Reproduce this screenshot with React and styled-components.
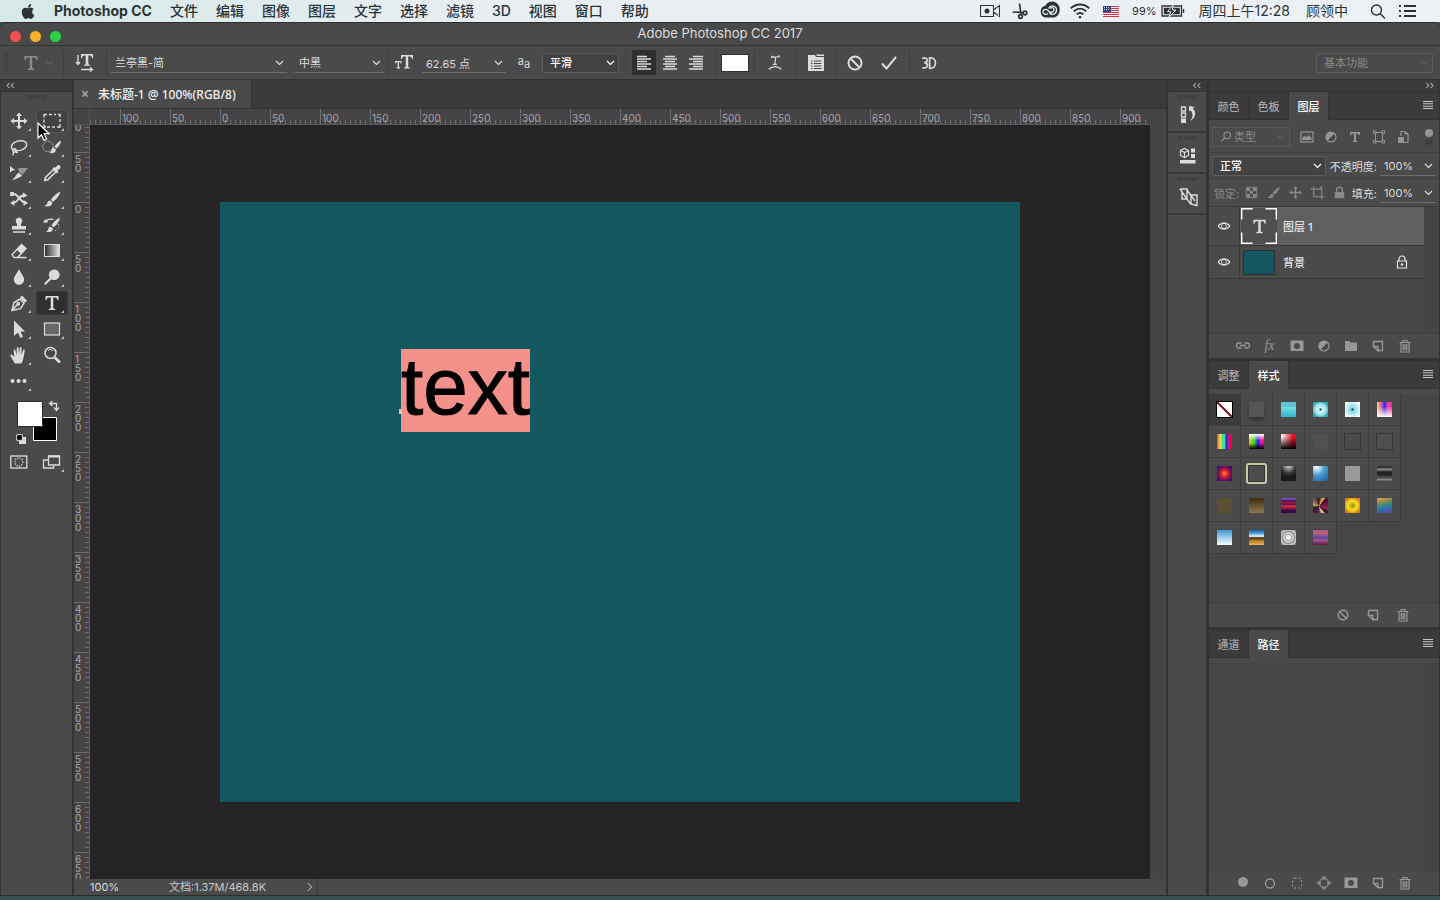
import React, { Component } from 'react';
import styled, { createGlobalStyle, css } from 'styled-components';
import { FaApple } from 'react-icons/fa';

const latin = `Inter, 'Liberation Sans', 'Noto Sans CJK SC', sans-serif`;
const humanist = `'Noto Sans', 'Noto Sans CJK SC', sans-serif`;

// ICONS, ALL DRAWN IN A 20 x 20 BOX
const icons = {
  move: (
    <path d="M10 1.500l3 3.500h-2v4h4V7l3.500 3-3.500 3v-2h-4v4h2l-3 3.500L7 15h2v-4H5v2l-3.500-3L5 7v2h4V5H7z" />
  ),
  marquee: (
    <path
      className="line"
      strokeWidth="1.4"
      d="M2 6.500V3.500h3M7 3.500h3M12 3.500h2M16 3.500h2v2.500M18 8v3M18 13v3h-3M13 16h-3M8 16H5M4 16H2v-2.500M2 11.500V8.500"
    />
  ),
  lasso: (
    <g className="line" strokeWidth="1.4">
      <path d="M5.500 13.500C1 12 1.500 7 6.500 4.800C12 2.500 18 4 17.600 8c-.4 4-6.600 6.400-12 5.300" />
      <circle cx="5.500" cy="13.500" r="1.700" />
      <path d="M4.500 15c.2 1.500-.2 2.500-1 3.200M6.500 14.500c1 1 1.500 1 2.500 1" />
    </g>
  ),
  quickSelect: (
    <g>
      <circle className="line" cx="6" cy="9.500" r="5.200" strokeDasharray="1.200 1.200" />
      <path d="M19 3.500c-2.500 1-5 3.500-6.500 6.200l2 1.800C17 9.500 18.800 6.500 19 3.500zM11.700 10.600c-2 .3-1.900 2-2.500 3.400-.4 1-1.200 1.500-2 1.800 3.500 1.300 6.600-.2 6.700-3.200z" />
    </g>
  ),
  slice: (
    <g>
      <path d="M1 3l5.500 4.200-3 .2L1 9.500z" />
      <path d="M3 17c2-1.500 4.500-5.500 6.500-7.500l3.800 3.200C10 15 6 16.500 3 17z" />
      <path opacity=".5" d="M9 5h10l-5.500 7L10 9z" />
    </g>
  ),
  eyedropper: (
    <g>
      <path d="M10.500 5.500l1.500-1.500 1.300.7 2-2.300c1.500-1.500 4.500 1 2.700 3L15.500 7.500l.9 1.400L15 10.500z" />
      <path className="line" strokeWidth="1.600" d="M11.500 6.500L3.500 14.500 2.800 17.500l3-.8 8-8z" />
    </g>
  ),
  shuffle: (
    <g>
      <path className="line" strokeWidth="2" d="M2.500 5c4-1 6 2 8 4.500s3.500 4.500 6 4M16 6c-3-.3-5 2-6.500 4S6 14.500 4 13.500" />
      <path d="M18.500 6.500L14 3.500v5.500zM1 14l4.500-3v5.800zM19 14l-4.500-3v5.800zM1.200 3h3.600v4H1.200z" />
    </g>
  ),
  brush: (
    <path d="M18.500 2.500C14.500 4 11 7.500 9 10.800l2 1.900C14.500 10.500 17.500 6.500 18.500 2.500zM8.200 11.500c-2.700.2-2.600 2.200-3.200 3.500-.5 1-1.700 1.400-2.800 1.500 3.500 1.800 8 .9 8.200-3z" />
  ),
  stamp: (
    <path d="M10 2.500a3.300 3.300 0 0 1 2.700 5.200c-.8 1.100-1 2.300-.8 3.300H17v3.500H3V11h5.100c.2-1 0-2.200-.8-3.300A3.300 3.300 0 0 1 10 2.500zM4 16.300h12v1.500H4z" />
  ),
  historyBrush: (
    <g>
      <path d="M18 2.500c-3.500 1.500-6.500 4.500-8.500 8l2 1.700c3.500-2 5.800-5.700 6.500-9.700zM8.500 11.500c-2 .3-2 2-2.500 3.200-.4 1-1.300 1.500-2 1.800 3.500 1.500 7 .2 7-3zM1 7.500L3.500 4l2.800 3.500z" />
      <path className="line" strokeWidth="1.300" d="M4 6c2-2 5-2 7.500-1.500" />
      <path className="line" strokeDasharray="1 1.500" d="M16.500 9c1.500 3-.5 6-4.500 7" />
    </g>
  ),
  eraser: (
    <g>
      <path d="M12.500 3.500l4.500 4-5 5.300L7.500 8.500z" />
      <path className="line" strokeWidth="1.400" d="M12.500 3.500l4.500 4-8.500 9H5L3 13.800zM8 16.500h9.500" />
    </g>
  ),
  gradient: (
    <g>
      <defs>
        <linearGradient id="toolGradient">
          <stop offset="0" stopColor="#2b2b2b" />
          <stop offset="1" stopColor="#e6e6e6" />
        </linearGradient>
      </defs>
      <rect x="2.500" y="3.500" width="15" height="12" fill="url(#toolGradient)" stroke="currentColor" />
    </g>
  ),
  drop: <path d="M10 2c1.500 4 5.200 7 5.200 10.500a5.200 5.200 0 0 1-10.400 0C4.800 9 8.500 6 10 2z" />,
  dodge: <path d="M12 2.500a5.300 5.300 0 1 1-2.600 9.700L3.500 18 2 16.700l5.700-6A5.300 5.300 0 0 1 12 2.500z" />,
  pen: (
    <g>
      <g className="line" strokeWidth="1.500">
        <path d="M3 17.500l2-8 6-3.500 4 4.200-3.500 5.500z" />
        <path d="M3 17.500l5.500-6" />
        <circle cx="9.300" cy="10.800" r="1.200" />
      </g>
      <path d="M11 4.500l2-2 5 5.200-2 2z" />
    </g>
  ),
  type: (
    <path d="M3.500 3h13v4h-1.200c-.3-1.800-.8-2.500-2.600-2.500h-1.400v10c0 1 .4 1.400 2 1.400V17H6.700v-1.100c1.600 0 2-.4 2-1.400v-10H7.300C5.500 4.500 5 5.200 4.700 7H3.500z" />
  ),
  arrow: <path d="M5 1.500l11 11h-4.500l2.500 5.200-2.600 1.200-2.400-5.300L5 17z" />,
  rect: <rect x="2.500" y="4" width="15" height="12" fill="#68686a" stroke="currentColor" strokeWidth="1.200" />,
  hand: (
    <path d="M6 18.500C4 16 2.800 13 1.500 11c-.7-1.200.8-2 1.800-1l2.200 2.200L4.600 5.500c-.2-1.200 1.500-1.600 1.800-.3l1.300 5V3.300c0-1.300 1.800-1.300 1.900 0l.4 6.400.8-6.800c.2-1.200 1.900-1 1.800.2l-.3 7 1.700-5c.4-1.200 2-.7 1.800.5-1 4.600-1 9-3.300 12.900z" />
  ),
  zoom: (
    <g>
      <circle className="line" cx="8.500" cy="8" r="5.500" strokeWidth="1.500" />
      <path className="line" strokeWidth="2.600" d="M12.700 12.500L18 17.500" />
      <path className="line" d="M6 5.500c2-1.500 4-1 5 .5" />
    </g>
  ),
  dots: (
    <g>
      <circle cx="3.500" cy="10" r="2" />
      <circle cx="9.500" cy="10" r="2" />
      <circle cx="15.500" cy="10" r="2" />
    </g>
  ),
  quickMask: (
    <g className="line" strokeWidth="1.300">
      <rect x="1.800" y="4" width="16" height="12" />
      <circle cx="9.800" cy="10" r="4" strokeDasharray="1.200 1.200" />
    </g>
  ),
  screenMode: (
    <g className="line" strokeWidth="1.300">
      <path d="M6 8H1.500v8h10v-2.500" />
      <path d="M6.500 4h11v9h-11z" fill="#4a4a4a" />
      <path strokeWidth="2" d="M6.500 4.500h11" />
    </g>
  ),
  orientation: (
    <g>
      <path d="M6 1h12v4h-1c-.3-1.700-.7-2.500-2.300-2.500h-1.400v8c0 1 .4 1.200 1.800 1.200v1.100H8.900v-1.100c1.400 0 1.800-.3 1.800-1.200v-8H9.300C7.700 2.500 7.300 3.300 7 5H6z" />
      <path className="line" strokeWidth="1.300" d="M3 2v9M1 9l2 2.500L5 9M6 16.500h11M15 14.500l2.500 2-2.500 2" />
    </g>
  ),
  fontSize: (
    <g>
      <path d="M7 2h12v4h-1c-.3-1.700-.7-2.500-2.300-2.500h-1.500v9.700c0 1 .4 1.200 1.900 1.200v1.100H9.900v-1.100c1.500 0 1.900-.2 1.900-1.200V3.500h-1.500C8.700 3.500 8.300 4.300 8 6H7z" />
      <path d="M1 8h6.500v2.500h-.8c-.1-.8-.4-1.300-1.200-1.300H5v4.600c0 .5.300.6 1 .6v1H2.600v-1c.7 0 1-.1 1-.6V9.200H3c-.8 0-1.100.5-1.200 1.300H1z" />
    </g>
  ),
  alignLeft: <path className="line" strokeWidth="1.300" d="M3 3.500h10M3 6h14M3 8.500h10M3 11h14M3 13.500h10M3 16h14" />,
  alignCenter: <path className="line" strokeWidth="1.300" d="M5 3.500h10M3 6h14M5 8.500h10M3 11h14M5 13.500h10M3 16h14" />,
  alignRight: <path className="line" strokeWidth="1.300" d="M7 3.500h10M3 6h14M7 8.500h10M3 11h14M7 13.500h10M3 16h14" />,
  warp: (
    <g className="line" strokeWidth="1.400">
      <path d="M6.500 3c2 .8 5 .6 8-.5M6.500 2v2.500M14.500 1.500V4M10.500 3.500c.3 3-.3 6-.8 8M7.500 11.500h4.500M3 17c4-4 10-4 14 0" />
    </g>
  ),
  charPanel: (
    <g>
      <path d="M2 2h7l1 2h8v14H2z" />
      <path d="M10 1.500h8V3h-7z" />
      <path stroke="#4a4a4a" d="M5 8h1.500M8 8h7.500M5 10.500h1.500M8 10.500h7.500M5 13h1.500M8 13h7.500M5 15.500h1.500M8 15.500h7.500" />
    </g>
  ),
  cancel: (
    <g className="line" strokeWidth="2">
      <circle cx="10" cy="10" r="6.500" />
      <path d="M5.500 5.500l9 9" />
    </g>
  ),
  check: <path className="line" strokeWidth="2" d="M3 10.500l4.500 5L17 4" />,
  threeD: (
    <g className="line" strokeWidth="1.900">
      <path d="M2.500 4.500h2.700c4 0 3.800 5-.2 5h-.5c5 0 5 6 .2 6H2.500" />
      <path d="M10.700 4.200v11.500h1.500c6.600 0 6.600-11.500 0-11.500z" />
    </g>
  ),
  history: (
    <g>
      <path className="line" strokeWidth="1.300" d="M3.500 2h4v4h-4zM3.500 8h4v4h-4z" />
      <path d="M3 13.500h5V18H3zM11 6V1l5.500 1-1.800 1.800c4.300 3.200 3 9.200-2.700 12.200 3-3.500 3.500-7.500.7-10.500z" />
    </g>
  ),
  properties: (
    <g>
      <path className="line" strokeWidth="1.200" d="M2.500 4.500l4-2 4 2v5l-4 2-4-2zM2.500 4.500l4 2 4-2M6.500 6.500v5" />
      <path d="M13 2.500h4v4h-4zM13 8h4v4h-4zM2 14h15.500v3.500H2z" />
    </g>
  ),
  character: (
    <path
      className="line"
      strokeWidth="1.400"
      d="M2 2h7v10H4V4.500M2 2l10.500 15 6.500 1.500V8h-6v9M9 3l8 11"
    />
  ),
  picture: (
    <g>
      <rect className="line" x="4" y="5" width="12" height="10" strokeWidth="1.200" />
      <path d="M5.500 13V10.500l2-2 2 2 2-2.500 3 3V13z" />
    </g>
  ),
  adjust: (
    <g>
      <circle className="line" cx="10" cy="10" r="5" strokeWidth="1.200" />
      <path d="M13.800 6.200A5.300 5.300 0 0 0 6.200 13.800z" />
    </g>
  ),
  typeSmall: <path d="M5 5h10v3.200h-1c-.2-1.200-.6-1.800-1.800-1.800H11v6.600c0 .8.300 1 1.300 1v1H7.700v-1c1 0 1.300-.2 1.300-1V6.400H7.800C6.600 6.400 6.200 7 6 8.200H5z" />,
  shape: (
    <g className="line">
      <path d="M6.500 5.500h7v9h-7z" />
      <path fill="#4a4a4a" d="M4.500 4h2.500v2.500H4.500zM13 4h2.500v2.500H13zM4.500 13.500h2.500V16H4.500zM13 13.500h2.500V16H13z" />
    </g>
  ),
  smart: (
    <g>
      <path className="line" strokeWidth="1.200" d="M8 9V4.500h4L15 7v8.500h-4M12 4.500V7h3" />
      <path d="M5 10h6v6H5z" />
    </g>
  ),
  filterSwitch: (
    <g>
      <circle cx="12" cy="6" r="4" />
      <path fill="#3f3f40" d="M8 12h8v2a4 4 0 0 1-8 0z" />
    </g>
  ),
  checker: (
    <g>
      <path className="line" d="M4.500 4.500h11v11h-11z" />
      <path d="M5 5h3.500v3.500H5zM11.500 5H15v3.500h-3.500zM8.500 8.500h3v3h-3zM5 11.500h3.500V15H5zM11.500 11.500H15V15h-3.500z" />
    </g>
  ),
  artboard: (
    <g className="line" strokeWidth="1.200">
      <path d="M3 6.500h11.500V17M6 3.500v11h11M15 3.500l-3 3" />
    </g>
  ),
  lock: (
    <g>
      <path d="M5 9.500h10V16H5z" />
      <path className="line" strokeWidth="1.500" d="M7 10V7.500a3 3 0 0 1 6 0V10" />
    </g>
  ),
  lockOutline: (
    <g>
      <path className="line" strokeWidth="1.200" d="M5.500 9h9v7h-9zM7 9V7a3 3 0 0 1 6 0v2" />
      <circle cx="10" cy="12.500" r="1.200" />
    </g>
  ),
  eye: (
    <path
      fillRule="evenodd"
      d="M3.500 10C6.500 5 13.500 5 16.500 10c-3 5-10 5-13 0zm1.800 0c1 1.500 2 2.200 3 2.600-1.600-1.400-1.600-3.800 0-5.200-1 .4-2 1.100-3 2.600zm9.400 0c-1-1.500-2-2.200-3-2.600 1.600 1.400 1.600 3.800 0 5.200 1-.4 2-1.100 3-2.600zM10 8a2 2 0 1 0 0 4 2 2 0 0 0 0-4z"
    />
  ),
  link: (
    <g className="line" strokeWidth="1.300">
      <path d="M8.500 12h-2.500a2.500 2.500 0 0 1 0-5h2.500M11.500 7H14a2.500 2.500 0 0 1 0 5h-2.500M7 9.500h6" />
    </g>
  ),
  mask: (
    <path fillRule="evenodd" d="M3.500 4.500h13v10.500h-13zM10 7a3 3 0 1 0 0 6 3 3 0 0 0 0-6z" />
  ),
  folder: <path d="M4 5h4.500l1 1.500H16V15H4z" />,
  newItem: (
    <path className="line" strokeWidth="1.300" d="M5.500 10.500V5.500h9v9h-4.500M5.500 10.500h4.500v4.500zM10 14.500l-4.500-4" />
  ),
  trash: (
    <path
      className="line"
      strokeWidth="1.200"
      d="M4.500 6.500h11M8 6.500V4.500h4v2M6 6.500v9.500h8V6.500M8.300 8v6.500M10 8v6.500M11.700 8v6.500"
    />
  ),
  forbid: (
    <g className="line" strokeWidth="1.500">
      <circle cx="10" cy="10" r="4.800" />
      <path d="M6.500 6.500l7 7" />
    </g>
  ),
  dot: <circle cx="10" cy="9" r="5" />,
  ring: <circle className="line" cx="10" cy="10.500" r="4.500" strokeWidth="1.300" />,
  selection: <rect className="line" x="5.500" y="5" width="9" height="10" rx="2" strokeDasharray="2 2" strokeWidth="1.200" />,
  workPath: (
    <g className="line" strokeWidth="1.200">
      <circle cx="10" cy="10" r="4.500" />
      <path fill="#4a4a4a" d="M9 4h2v2H9zM9 14h2v2H9zM4 9h2v2H4zM14 9h2v2h-2z" />
    </g>
  ),
  camera: (
    <g>
      <path className="line" strokeWidth="1.100" d="M.5 4.500h13v11H.5zM13.500 9l6-4.500v11l-6-4.500" />
      <circle cx="7" cy="10" r="2.500" />
    </g>
  ),
  scissors: (
    <g className="line" strokeWidth="1.700">
      <path d="M9.500 2.500L11 13M2.500 11L14 11.500" />
      <circle cx="10.500" cy="15.500" r="1.800" />
      <circle cx="15" cy="12" r="1.800" />
    </g>
  ),
  cloud: (
    <g>
      <path d="M6.500 16.500a6 6 0 0 1-1.300-11.800 7.700 7.700 0 0 1 14.300 5.500c-.5 4-3.500 6.300-6.500 6.300z" />
      <path
        stroke="#e4ecef"
        strokeWidth="1.300"
        fill="none"
        d="M11.500 13L8 9.500C5.500 7 2.500 9 3 11.200s3 3 5 1.300M8.500 7.500c2-4 8-3 8 1.500s-5 5.500-7 3M10 7.500c1.500-1.700 4-1 4 1.300s-2.500 3-3.800 1.700"
      />
    </g>
  ),
  wifi: (
    <g className="line" strokeWidth="1.900">
      <path d="M.8 7.300c5.500-5 13-5 18.400 0M3.800 10.300c4-3.400 8.500-3.400 12.400 0M6.700 13.300c2-1.700 4.600-1.700 6.600 0" />
      <path d="M9 15.500l1 1 1-1" />
    </g>
  ),
  search: (
    <g className="line" strokeWidth="1.400">
      <circle cx="8.500" cy="9" r="5" />
      <path d="M12 12.500l5 5" />
    </g>
  ),
  list: (
    <path className="line" strokeWidth="1.800" d="M6 5h12M6 10h12M6 15h12M1 5h2M1 10h2M1 15h2" />
  ),
  searchSmall: (
    <g className="line" strokeWidth="1.600">
      <circle cx="11.500" cy="8" r="4" />
      <path d="M8.500 11L4 15.500" />
    </g>
  ),
  hamburger: <path className="line" strokeWidth="1.100" d="M5 5.500h10M5 7.800h10M5 10.200h10M5 12.500h10" />
};

const Icon = ({ name, size = 20 }) => (
  <Glyph width={size} height={size} viewBox="0 0 20 20" aria-hidden="true">
    {icons[name]}
  </Glyph>
);

const Chevron = () => (
  <ChevronGlyph width="9" height="6" viewBox="0 0 9 6" aria-hidden="true">
    <path d="M1 1l3.500 3.500L8 1" />
  </ChevronGlyph>
);

const menus = ['文件', '编辑', '图像', '图层', '文字', '选择', '滤镜', '3D', '视图', '窗口', '帮助'];

const tools = [
  ['move', '移动'],
  ['marquee', '矩形选框'],
  ['lasso', '套索'],
  ['quickSelect', '快速选择'],
  ['slice', '切片'],
  ['eyedropper', '吸管'],
  ['shuffle', '内容感知移动'],
  ['brush', '画笔'],
  ['stamp', '仿制图章'],
  ['historyBrush', '历史记录画笔'],
  ['eraser', '橡皮擦'],
  ['gradient', '渐变'],
  ['drop', '模糊'],
  ['dodge', '减淡'],
  ['pen', '钢笔'],
  ['type', '文字'],
  ['arrow', '路径选择'],
  ['rect', '矩形'],
  ['hand', '抓手'],
  ['zoom', '缩放'],
  ['dots', '更多']
];

const swatches = [
  'linear-gradient(to top right, #fff 46%, #8b1a2b 46%, #8b1a2b 54%, #fff 54%)',
  '#555456',
  'linear-gradient(#5cc3d2 0 35%, #78d8e4 36%, #2fb6c6)',
  'radial-gradient(#134 0, #d9f7fa 2px, #8fdfe8 6px, #2fa9b8 8px)',
  'radial-gradient(#134 0, #8fd9ea 2px, #d5f3f8 7px, #fff 9px)',
  'linear-gradient(#0000 30%, #fff), linear-gradient(90deg, #f6e53a, #e06ab0 25%, #3b2ad0 50%, #f03cc8 75%, #e8306a)',
  'linear-gradient(90deg, #f36, #f5e92b 20%, #4be08a 38%, #2bd7e8 52%, #25307a 62%, #a020d8 75%, #f03 90%)',
  'linear-gradient(#fff, #fff0 45%, #0000 60%, #000), linear-gradient(90deg, #fb2, #3d3 35%, #22c 60%, #e1d 80%, #f12)',
  'linear-gradient(#0000 20%, #000), linear-gradient(90deg, #fff, #e01020 80%)',
  '#504f51',
  '#4a4a4a',
  '#4e4e4e',
  'radial-gradient(#ff9a1a, #e8202a 30%, #7a1060 60%, #14107a)',
  '#4c4c4c',
  'radial-gradient(circle at 50% 0, #ccc, #777 25%, #333 45%, #181818 70%)',
  'radial-gradient(circle at 25% 10%, #fff, #4a9ad2 45%, #1c5c9c)',
  '#9b999c',
  'linear-gradient(#333 2px, #999 3px, #444 5px, #222 6px, #222 9px, #555 11px, #333 12px, #999 13px, #555)',
  '#5a4e33',
  'linear-gradient(#3d2c0e, #8c7a52)',
  'linear-gradient(#7a4ac0 1px, #3a1050 3px, #b8203a 5px, #3a1050 6px, #e03040 8px, #a01840 10px, #3a1050 12px, #2a0840)',
  'conic-gradient(at 40% 55%, #301020, #e8c860 8%, #401030 12%, #a82050 30%, #111 36%, #e8e0a0 42%, #60204a 50%, #222 70%, #d0a060 80%, #301020)',
  'radial-gradient(#8a9a10, #ffe020 45%, #d87a10 80%)',
  'linear-gradient(165deg, #e8a040, #8a8a50 30%, #2a8a90 50%, #3a60b0 75%, #604a90)',
  'linear-gradient(#3d95cc, #a8d4ee 55%, #f4faff)',
  'linear-gradient(#1c5aa0, #5aa8e0 25%, #f4faff 42%, #3a2a14 52%, #b87a20 70%, #e8b060)',
  'radial-gradient(#eee 20%, #aaa 30%, #ddd 45%, #888 55%, #ccc 70%, #666)',
  'linear-gradient(#a85a8a, #c0607a 25%, #5a48a8 48%, #a05090 70%, #5a1a3a)'
];

const xRuler = [...Array(22)].map((_, i) => Math.abs(i * 50 - 150));
const yRuler = [...Array(16)].map((_, i) => Math.abs(i * 50 - 100));

class App extends Component {
  state = { tool: 'type', align: 'alignLeft', layer: 1 };

  pickTool = tool => {
    this.setState({ tool });
  };

  renderOptions() {
    const { align } = this.state;
    return (
      <OptionsBar>
        <Grip $vertical />
        <ToolPreset aria-label="文字工具预设">
          <Icon name="type" />
          <Chevron />
        </ToolPreset>
        <Divider />
        <OptionButton $width={42} aria-label="切换文本取向">
          <Icon name="orientation" />
        </OptionButton>
        <Divider />
        <Field $width={176} $gap={4}>
          <select aria-label="字体" defaultValue="兰亭黑-简">
            <option>兰亭黑-简</option>
          </select>
          <Chevron />
        </Field>
        <Field $width={89} $gap={8}>
          <select aria-label="字重" defaultValue="中黑">
            <option>中黑</option>
          </select>
          <Chevron />
        </Field>
        <Divider $before={4} />
        <OptionButton $width={30} aria-label="字号">
          <Icon name="fontSize" />
        </OptionButton>
        <Field $width={84} $gap={3}>
          <input aria-label="字体大小" defaultValue="62.65 点" />
          <Chevron />
        </Field>
        <AntiAlias>
          a<sub>a</sub>
        </AntiAlias>
        <Field $boxed $width={77}>
          <select aria-label="消除锯齿" defaultValue="平滑">
            <option>平滑</option>
          </select>
          <Chevron />
        </Field>
        <Divider $before={6} />
        <AlignGroup>
          {['alignLeft', 'alignCenter', 'alignRight'].map(name => (
            <AlignButton
              key={name}
              aria-label={name}
              $active={align === name}
              onClick={() => this.setState({ align: name })}
            >
              <Icon name={name} />
            </AlignButton>
          ))}
        </AlignGroup>
        <Divider $before={8} />
        <ColorChip aria-label="文本颜色" />
        <Divider $before={5} />
        <OptionButton $width={40} aria-label="变形文字">
          <Icon name="warp" size={18} />
        </OptionButton>
        <Divider />
        <OptionButton $width={39} aria-label="字符面板">
          <Icon name="charPanel" />
        </OptionButton>
        <Divider />
        <OptionButton $width={38} aria-label="取消">
          <Icon name="cancel" />
        </OptionButton>
        <OptionButton $width={30} aria-label="提交">
          <Icon name="check" />
        </OptionButton>
        <Divider $before={5} />
        <OptionButton $width={38} aria-label="3D">
          <Icon name="threeD" size={18} />
        </OptionButton>
        <Workspace $boxed $dim $width={117}>
          <select aria-label="工作区" defaultValue="基本功能">
            <option>基本功能</option>
          </select>
          <Chevron />
        </Workspace>
      </OptionsBar>
    );
  }

  renderToolbox() {
    const { tool } = this.state;
    return (
      <Toolbox>
        <Collapse>‹‹</Collapse>
        <ToolBody>
          <Grip />
          <ToolGrid>
            {tools.map(([name, label]) => (
              <Tool
                key={name}
                aria-label={label}
                $active={tool === name}
                $hover={name === 'marquee'}
                onClick={() => this.pickTool(name)}
              >
                <Icon name={name} />
                {name !== 'zoom' && <Corner />}
                {name === 'marquee' && (
                  <Pointer width="13" height="20" viewBox="0 0 13 20">
                    <path d="M1 1v15l3.500-3.300L7 18.500l2.600-1.200-2.500-5.600H12z" />
                  </Pointer>
                )}
              </Tool>
            ))}
          </ToolGrid>
          <ColorPair width="46" height="46" viewBox="0 0 46 46" aria-label="前景色和背景色">
            <path d="M17.500 17.500h23v23h-23z" fill="#000" stroke="#fff" />
            <path d="M1.500 1.500h25v25h-25z" fill="#fff" stroke="#2b2b2b" />
            <path d="M34.500 3.500h6v6M36.500 1l-3 2.500 3 2.500M38 7.500l2.500 3L43 7.500" fill="none" stroke="#dcdcdc" strokeWidth="1.300" />
            <path d="M3 37h7v7H3z" fill="#dcdcdc" />
            <path d="M.7 34.700h5.600v5.600H.7z" fill="#000" stroke="#dcdcdc" />
          </ColorPair>
          <ToolGrid>
            <Tool aria-label="快速蒙版">
              <Icon name="quickMask" />
            </Tool>
            <Tool aria-label="屏幕模式">
              <Icon name="screenMode" />
              <Corner />
            </Tool>
          </ToolGrid>
        </ToolBody>
      </Toolbox>
    );
  }

  renderDocument() {
    return (
      <DocumentArea>
        <DocTabs>
          <DocTab>
            <CloseTab aria-label="关闭">×</CloseTab>
            未标题-1 @ 100%(RGB/8)
          </DocTab>
        </DocTabs>
        <View>
          <RulerCorner />
          <RulerX>
            {xRuler.map((value, i) => (
              <MarkX key={i}>{value}</MarkX>
            ))}
          </RulerX>
          <Gutter />
          <RulerY>
            {yRuler.map((value, i) => (
              <MarkY key={i}>{value}</MarkY>
            ))}
          </RulerY>
          <Canvas>
            <Artboard>
              <TextLayer>text</TextLayer>
            </Artboard>
          </Canvas>
          <Gutter />
        </View>
        <StatusBar>
          <Zoom>100%</Zoom>
          <DocSize>文档:1.37M/468.8K</DocSize>
          <More aria-label="更多信息">
            <svg width="6" height="10" viewBox="0 0 6 10">
              <path d="M1 1l3.500 4L1 9" fill="none" stroke="#ccc" />
            </svg>
          </More>
        </StatusBar>
      </DocumentArea>
    );
  }

  renderPanels() {
    const { layer } = this.state;
    return (
      <Panels>
        <Collapse $right>››</Collapse>
        <Panel>
          <Tabs names={['颜色', '色板', '图层']} active="图层" />
          <FilterRow>
            <FilterBox>
              <Icon name="searchSmall" size={16} />
              <select aria-label="筛选类型" defaultValue="类型">
                <option>类型</option>
              </select>
              <Chevron />
            </FilterBox>
            <FilterIcons>
              {['picture', 'adjust', 'typeSmall', 'shape', 'smart', 'filterSwitch'].map(name => (
                <SmallButton key={name} aria-label={name} $width={24}>
                  <Icon name={name} />
                </SmallButton>
              ))}
            </FilterIcons>
          </FilterRow>
          <BlendRow>
            <Field $boxed $width={114}>
              <select aria-label="混合模式" defaultValue="正常">
                <option>正常</option>
              </select>
              <Chevron />
            </Field>
            <Amount>
              <label htmlFor="opacity">不透明度:</label>
              <Field $width={56}>
                <input id="opacity" defaultValue="100%" />
                <Chevron />
              </Field>
            </Amount>
          </BlendRow>
          <LockRow>
            <LockLabel>锁定:</LockLabel>
            {['checker', 'brush', 'move', 'artboard', 'lock'].map(name => (
              <SmallButton key={name} aria-label={name} $width={22}>
                <Icon name={name} size={name === 'brush' || name === 'move' ? 15 : 19} />
              </SmallButton>
            ))}
            <Amount>
              <label htmlFor="fill">填充:</label>
              <Field $width={56}>
                <input id="fill" defaultValue="100%" />
                <Chevron />
              </Field>
            </Amount>
          </LockRow>
          <LayerList>
            <Layer $height={38} onClick={() => this.setState({ layer: 1 })}>
              <Eye aria-label="可见">
                <Icon name="eye" />
              </Eye>
              <LayerInfo $active={layer === 1}>
                <svg width="36" height="36" viewBox="0 0 36 36" aria-hidden="true">
                  <rect width="36" height="36" fill="#4f4e51" />
                  <path d="M.7 11.500V.7h11M24.500.7h10.800v10.800M35.300 24.500v10.800H24.500M11.500 35.300H.7V24.500" fill="none" stroke="#fff" strokeWidth="1.400" />
                  <svg x="9" y="9" width="19" height="19" viewBox="0 0 20 20" fill="#dcdcdc">
                    {icons.type}
                  </svg>
                </svg>
                <span>图层 1</span>
              </LayerInfo>
            </Layer>
            <Layer $height={32} onClick={() => this.setState({ layer: 0 })}>
              <Eye aria-label="可见">
                <Icon name="eye" />
              </Eye>
              <LayerInfo $active={layer === 0}>
                <Thumb />
                <span>背景</span>
                <Icon name="lockOutline" />
              </LayerInfo>
            </Layer>
          </LayerList>
          <PanelFooter>
            <SmallButton $width={27} aria-label="链接图层">
              <Icon name="link" />
            </SmallButton>
            <SmallButton $width={27} aria-label="图层样式">
              <Fx>fx</Fx>
            </SmallButton>
            {['mask', 'adjust', 'folder', 'newItem', 'trash'].map(name => (
              <SmallButton key={name} aria-label={name} $width={27}>
                <Icon name={name} />
              </SmallButton>
            ))}
          </PanelFooter>
        </Panel>
        <Panel>
          <Tabs names={['调整', '样式']} active="样式" />
          <StylesBody>
            <StylesGrid>
              {swatches.map((fill, i) => (
                <StyleCell key={i} aria-label={`样式 ${i + 1}`} $first={i === 0}>
                  <Swatch $kind={i} style={{ background: fill }} />
                </StyleCell>
              ))}
            </StylesGrid>
          </StylesBody>
          <PanelFooter>
            {['forbid', 'newItem', 'trash'].map(name => (
              <SmallButton key={name} aria-label={name} $width={30}>
                <Icon name={name} />
              </SmallButton>
            ))}
          </PanelFooter>
        </Panel>
        <Panel $grow>
          <Tabs names={['通道', '路径']} active="路径" />
          <PathsBody />
          <PanelFooter>
            {['dot', 'ring', 'selection', 'workPath', 'mask', 'newItem', 'trash'].map(name => (
              <SmallButton key={name} aria-label={name} $width={27}>
                <Icon name={name} />
              </SmallButton>
            ))}
          </PanelFooter>
        </Panel>
      </Panels>
    );
  }

  render() {
    return (
      <Desktop>
        <GlobalStyle />
        <MenuBar>
          <AppleButton aria-label="Apple">
            <FaApple size={17} />
          </AppleButton>
          <MenuButton $bold>Photoshop CC</MenuButton>
          {menus.map(menu => (
            <MenuButton key={menu}>{menu}</MenuButton>
          ))}
          <MenuExtras>
            <Icon name="camera" />
            <Icon name="scissors" />
            <Icon name="cloud" />
            <Icon name="wifi" />
            <Flag width="16" height="11" viewBox="0 0 16 11">
              <path fill="#f3eef0" d="M0 0h16v11H0z" />
              <path stroke="#c23a4c" d="M0 .5h16M0 2.500h16M0 4.500h16M0 6.500h16M0 8.500h16M0 10.500h16" />
              <path fill="#35407c" d="M0 0h8v6H0z" />
              <path stroke="#c8cce4" strokeDasharray="1 1" d="M1 1.500h6M1 3.500h6" />
            </Flag>
            <Battery>
              99%
              <svg width="24" height="12" viewBox="0 0 24 12">
                <path d="M1 1h19.500v10H1z" fill="none" stroke="#2b3338" strokeWidth="1.300" />
                <path d="M2.800 2.800h16v6.400h-16zM21.800 4h1.400v4h-1.400z" fill="#2b3338" />
                <path d="M12 0L6.500 6.700h3.300L8 12l7-7h-3.500z" fill="#2b3338" stroke="#e6edf0" />
              </svg>
            </Battery>
            <Clock>周四上午12:28</Clock>
            <User>顾领中</User>
            <Icon name="search" />
            <Icon name="list" />
          </MenuExtras>
        </MenuBar>
        <Window>
          <TitleBar>
            <Lights>
              <Light $color="#f4504f" aria-label="关闭" />
              <Light $color="#f7b32f" aria-label="最小化" />
              <Light $color="#2fd043" aria-label="缩放" />
            </Lights>
            <Title>Adobe Photoshop CC 2017</Title>
          </TitleBar>
          {this.renderOptions()}
          <Workarea>
            {this.renderToolbox()}
            {this.renderDocument()}
            <Dock>
              <Collapse $right>‹‹</Collapse>
              {['history', 'properties', 'character'].map(name => (
                <DockItem key={name} aria-label={name}>
                  <Grip />
                  <Icon name={name} />
                </DockItem>
              ))}
            </Dock>
            {this.renderPanels()}
          </Workarea>
        </Window>
      </Desktop>
    );
  }
}

const Tabs = ({ names, active }) => (
  <TabRow>
    {names.map(name => (
      <Tab key={name} $active={name === active}>
        {name}
      </Tab>
    ))}
    <PanelMenu aria-label="面板菜单">
      <Icon name="hamburger" />
    </PanelMenu>
  </TabRow>
);

const GlobalStyle = createGlobalStyle`
  * {
    box-sizing: border-box;
  }

  body {
    margin: 0;
    font-family: ${latin};
    font-size: 11px;
    color: #dcdcdc;
  }

  button {
    border: 0;
    padding: 0;
    background: none;
    font: inherit;
    color: inherit;
  }
`;

const Glyph = styled.svg`
  display: block;
  flex: none;
  fill: currentColor;

  .line {
    fill: none;
    stroke: currentColor;
  }
`;

const ChevronGlyph = styled.svg`
  flex: none;
  fill: none;
  stroke: currentColor;
  stroke-width: 1.2;
  pointer-events: none;
`;

const Desktop = styled.div`
  height: 100vh;
  display: flex;
  flex-direction: column;
  padding-bottom: 4px;
  background: #35504f;
  overflow: hidden;
`;

const MenuBar = styled.nav`
  flex: none;
  height: 22px;
  display: flex;
  align-items: center;
  gap: 18px;
  padding: 0 22px 0 20px;
  background: linear-gradient(90deg, #d6e9e7, #e8eef2 35%, #edf1f4);
  color: #2b3338;
  font-size: 14px;
  line-height: 20px;
  white-space: nowrap;
`;

const AppleButton = styled.button`
  width: 16px;
  display: flex;
  justify-content: center;
`;

const MenuButton = styled.button`
  font-weight: ${({ $bold }) => ($bold ? 700 : 500)};
`;

const MenuExtras = styled.div`
  margin-left: auto;
  display: flex;
  align-items: center;
  gap: 10px;
`;

const Flag = styled.svg`
  margin: 0 3px;
`;

const Battery = styled.div`
  display: flex;
  align-items: center;
  gap: 4px;
  font-size: 11px;
`;

const Clock = styled.span`
  margin-left: 4px;
`;

const User = styled.span`
  margin: 0 10px 0 6px;
`;

const Window = styled.div`
  flex: 1;
  min-height: 0;
  display: flex;
  flex-direction: column;
  border: 1px solid #2d2d2d;
  border-width: 1px 0;
  border-radius: 6px 6px 0 0;
  background: #4a4a4a;
  overflow: hidden;
`;

const TitleBar = styled.header`
  flex: none;
  height: 23px;
  display: grid;
  grid-template-columns: 1fr auto 1fr;
  align-items: center;
  border-bottom: 1px solid #333;
`;

const Lights = styled.div`
  display: flex;
  gap: 9px;
  padding: 4px 0 0 10px;
`;

const Light = styled.button`
  width: 11px;
  height: 11px;
  border-radius: 50%;
  background: ${({ $color }) => $color};
`;

const Title = styled.h1`
  margin: 0;
  padding-bottom: 3px;
  font-size: 13px;
  font-weight: 400;
  line-height: 16px;
`;

const OptionsBar = styled.div`
  flex: none;
  height: 34px;
  display: flex;
  align-items: center;
  border-bottom: 1px solid #333;
`;

const Grip = styled.span`
  flex: none;
  width: 20px;
  height: 4px;
  background: repeating-linear-gradient(90deg, #3a3a3a 0 1px, #4a4a4a 1px 2px);

  ${({ $vertical }) =>
    $vertical &&
    css`
      width: 4px;
      height: 20px;
      margin-left: 4px;
      background: repeating-linear-gradient(#3e3e3e 0 1px, #4a4a4a 1px 2px);
    `}
`;

const ToolPreset = styled.button`
  width: 55px;
  display: flex;
  align-items: center;
  justify-content: center;
  gap: 4px;
  padding-left: 4px;
  color: #8a8a8a;

  ${ChevronGlyph} {
    color: #5e5e5e;
  }
`;

const Divider = styled.span`
  flex: none;
  width: 1px;
  height: 26px;
  margin-left: ${({ $before = 0 }) => $before}px;
  background: #3f3f3f;
`;

const OptionButton = styled.button`
  flex: none;
  width: ${({ $width }) => $width}px;
  display: flex;
  justify-content: center;
`;

const Field = styled.div`
  flex: none;
  width: ${({ $width }) => $width}px;
  height: 20px;
  margin-left: ${({ $gap = 0 }) => $gap}px;
  padding-top: 2px;
  display: flex;
  align-items: center;
  border-bottom: 1px solid #6e6e6e;
  color: #dcdcdc;

  select,
  input {
    appearance: none;
    width: 100%;
    min-width: 0;
    height: 16px;
    margin: 0 -14px 0 0;
    padding: 0 16px 0 4px;
    border: 0;
    outline: 0;
    background: none;
    font: inherit;
    color: inherit;
  }

  ${({ $boxed }) =>
    $boxed &&
    css`
      padding-top: 1px;
      border: 1px solid #5c5c5c;
      border-radius: 2px;
      background: #434243;
      font-weight: 500;
      color: #fff;

      select {
        padding-left: 7px;
      }
    `}

  ${ChevronGlyph} {
    margin-right: 2px;
    margin-left: 2px;
    margin-right: ${({ $boxed }) => ($boxed ? 1 : 0)}px;
  }

  ${({ $dim }) =>
    $dim &&
    css`
      background: none;
      font-weight: 400;
      color: #888;
    `}
`;

const Workspace = styled(Field)`
  margin: 0 7px 0 auto;

  ${ChevronGlyph} {
    color: #5e5e5e;
  }
`;

const AntiAlias = styled.span`
  width: 36px;
  padding-bottom: 4px;
  text-align: center;
  line-height: 14px;

  sub {
    font-size: 11px;
    line-height: 0;
    vertical-align: -3px;
  }
`;

const AlignGroup = styled.div`
  display: flex;
  gap: 2px;
  padding-left: 6px;
`;

const AlignButton = styled.button`
  width: 24px;
  height: 25px;
  display: flex;
  align-items: center;
  justify-content: center;
  background: ${({ $active }) => ($active ? '#302e31' : 'none')};
`;

const ColorChip = styled.button`
  width: 28px;
  height: 18px;
  margin-left: 4px;
  border: 1px solid #2f2f2f;
  background: #fff;
`;

const Workarea = styled.div`
  flex: 1;
  min-height: 0;
  display: flex;
`;

const Collapse = styled.div`
  flex: none;
  height: 12px;
  padding: 0 5px;
  border-bottom: 1px solid #333;
  background: #3b3b3b;
  color: #b5b5b5;
  text-align: ${({ $right }) => ($right ? 'right' : 'left')};
  font-size: 11px;
  line-height: 10px;
`;

const Toolbox = styled.aside`
  flex: none;
  width: 74px;
  display: flex;
  flex-direction: column;
  border: solid #333;
  border-width: 0 2px 0 1px;
`;

const ToolBody = styled.div`
  display: flex;
  flex-direction: column;
  padding: 3px 2px;

  > ${Grip} {
    align-self: center;
    margin-bottom: 10px;
  }
`;

const ToolGrid = styled.div`
  display: grid;
  grid-template-columns: 32px 32px;
  grid-auto-rows: 24px;
  gap: 2px 1px;
`;

const Tool = styled.button`
  position: relative;
  display: flex;
  align-items: center;
  justify-content: center;
  border: 1px solid transparent;
  border-radius: 2px;

  ${({ $hover }) =>
    $hover &&
    css`
      border-color: #565656;
      background: #424143;
    `}

  ${({ $active }) =>
    $active &&
    css`
      border-color: #3a3a3a;
      background: #302e31;
    `}
`;

const Corner = styled.span`
  position: absolute;
  right: 3px;
  bottom: 1px;
  width: 3px;
  height: 3px;
  background: #bdbdbd;
  clip-path: polygon(100% 0, 100% 100%, 0 100%);
`;

const Pointer = styled.svg`
  position: absolute;
  left: 0;
  top: 12px;
  z-index: 1;
  fill: #000;
  stroke: #fff;
  stroke-width: 1.2;
`;

const ColorPair = styled.svg`
  margin: 7px 0 4px 13px;
`;

const DocumentArea = styled.main`
  flex: 1;
  min-width: 0;
  display: flex;
  flex-direction: column;
`;

const DocTabs = styled.div`
  flex: none;
  height: 29px;
  display: flex;
  border-bottom: 1px solid #333;
  background: #3b3b3b;
`;

const DocTab = styled.div`
  min-width: 178px;
  display: flex;
  align-items: center;
  padding: 0 9px 0 6px;
  border-right: 1px solid #333;
  background: #4a4a4a;
  font-family: ${humanist};
  font-size: 12px;
  font-weight: 500;
  color: #f0f0f0;
`;

const CloseTab = styled.button`
  width: 10px;
  margin-right: 8px;
  font-size: 14px;
  line-height: 14px;
  color: #b5b5b5;
`;

const View = styled.div`
  flex: 1;
  min-height: 0;
  display: grid;
  grid-template-columns: 16px 1fr 16px;
  grid-template-rows: 16px 1fr;
`;

const RulerCorner = styled.div`
  border: dotted #5c5c5c;
  border-width: 0 1px 1px 0;
  background: #454345;
`;

const RulerX = styled.div`
  min-width: 0;
  display: flex;
  justify-content: center;
  border-bottom: 1px solid #5a595b;
  background: #454345;
  overflow: hidden;
`;

const MarkX = styled.span`
  flex: none;
  width: 50px;
  padding: 3px 0 0 1px;
  border-left: 1px solid #6d6c6e;
  background: repeating-linear-gradient(90deg, #0000 0 4px, #6d6c6e 4px 5px) 0 100% / 100% 4px no-repeat;
  font-size: 10px;
  line-height: 12px;
  color: #a5a5a5;
`;

const RulerY = styled.div`
  min-height: 0;
  display: flex;
  flex-direction: column;
  justify-content: center;
  border-right: 1px solid #5a595b;
  background: #454345;
  overflow: hidden;
`;

// THE NARROW RIGHT PADDING STACKS THE DIGITS ONE PER LINE
const MarkY = styled.span`
  flex: none;
  height: 50px;
  padding: 2px 7px 0 1px;
  border-top: 1px solid #6d6c6e;
  background: repeating-linear-gradient(#0000 0 4px, #6d6c6e 4px 5px) 100% 0 / 4px 100% no-repeat;
  font-size: 10px;
  line-height: 9px;
  word-break: break-all;
  color: #a5a5a5;
`;

const Gutter = styled.div`
  background: #454545;
`;

const Canvas = styled.div`
  min-width: 0;
  min-height: 0;
  display: flex;
  align-items: center;
  justify-content: center;
  background: #252326;
  overflow: hidden;
`;

const Artboard = styled.div`
  position: relative;
  flex: none;
  width: 800px;
  height: 600px;
  background: #12585e;
`;

const TextLayer = styled.div`
  position: absolute;
  left: 181px;
  top: 147px;
  padding-bottom: 7px;
  background: #f5918b;
  font-family: 'Liberation Sans', sans-serif;
  font-size: 80px;
  line-height: 76px;
  color: #000;
  -webkit-text-stroke: 1px #000;

  &::before {
    content: '';
    position: absolute;
    left: -2px;
    bottom: 18px;
    width: 3px;
    height: 5px;
    background: #d8c4c4;
  }
`;

const StatusBar = styled.footer`
  flex: none;
  height: 16px;
  display: flex;
  align-items: center;
  padding-left: 16px;
  line-height: 14px;
`;

const Zoom = styled.span`
  width: 79px;
`;

const DocSize = styled.span`
  width: 138px;
  color: #c8c8c8;
`;

const More = styled.button`
  height: 16px;
  display: flex;
  align-items: center;
  padding-right: 4px;
  border-right: 1px solid #3c3c3c;
`;

const Dock = styled.aside`
  flex: none;
  width: 42px;
  display: flex;
  flex-direction: column;
  border: solid #333;
  border-width: 0 2px;
`;

const DockItem = styled.button`
  height: 41px;
  display: flex;
  flex-direction: column;
  align-items: center;
  gap: 6px;
  padding: 3px 0 0 1px;
  border-bottom: 2px solid #383838;
`;

const Panels = styled.aside`
  flex: none;
  width: 232px;
  display: flex;
  flex-direction: column;
  border: solid #333;
  border-width: 0 1px;
`;

const Panel = styled.section`
  display: flex;
  flex-direction: column;
  flex: ${({ $grow }) => ($grow ? 1 : 'none')};

  & + & {
    border-top: 3px solid #333;
  }
`;

const TabRow = styled.div`
  flex: none;
  height: 28px;
  display: flex;
  background: #3b3b3b;
`;

const Tab = styled.button`
  width: 40px;
  border-right: 1px solid #333;
  border-bottom: 1px solid ${({ $active }) => ($active ? '#4a4a4a' : '#333')};
  background: ${({ $active }) => ($active ? '#4a4a4a' : 'none')};
  font-weight: 500;
  color: ${({ $active }) => ($active ? '#fff' : '#a8a8a8')};
`;

const PanelMenu = styled.button`
  flex: 1;
  display: flex;
  align-items: center;
  justify-content: flex-end;
  padding-right: 1px;
  border-bottom: 1px solid #333;
  color: #c8c8c8;
`;

const FilterRow = styled.div`
  height: 33px;
  display: flex;
  align-items: center;
  justify-content: space-between;
  padding: 1px 0 0 3px;
  border-bottom: 1px solid #3f3f3f;
`;

const FilterBox = styled.div`
  width: 78px;
  height: 20px;
  display: flex;
  align-items: center;
  padding: 0 4px 0 5px;
  border: 1px solid #5a5a5a;
  color: #8a8a8a;

  select {
    appearance: none;
    flex: 1;
    min-width: 0;
    border: 0;
    padding: 0;
    background: none;
    font: inherit;
    color: inherit;
  }

  ${ChevronGlyph} {
    color: #5e5e5e;
  }
`;

const FilterIcons = styled.div`
  display: flex;
  color: #969598;
`;

const SmallButton = styled.button`
  flex: none;
  width: ${({ $width }) => $width}px;
  height: 20px;
  display: flex;
  align-items: center;
  justify-content: center;
`;

const BlendRow = styled.div`
  height: 26px;
  display: flex;
  align-items: center;
  padding: 0 3px;
  border-bottom: 1px solid #3f3f3f;
`;

const Amount = styled.div`
  margin-left: auto;
  display: flex;
  align-items: center;
  gap: 3px;
  white-space: nowrap;
`;

const LockRow = styled.div`
  height: 28px;
  display: flex;
  align-items: center;
  padding: 0 3px 0 5px;
  border-bottom: 1px solid #3a3a3a;

  > ${SmallButton} {
    color: #8a898c;
  }
`;

const LockLabel = styled.span`
  width: 26px;
  color: #8a8a8a;
`;

const LayerList = styled.div`
  height: 126px;
  border-right: 15px solid #454545;
  background: #464648;
`;

const Layer = styled.div`
  height: ${({ $height }) => $height + 1}px;
  display: flex;
  border-bottom: 1px solid #3a3a3a;
  background: #4a4a4a;
`;

const Eye = styled.button`
  width: 31px;
  display: flex;
  align-items: center;
  justify-content: center;
  border-right: 1px solid #3a3a3a;
`;

const LayerInfo = styled.div`
  flex: 1;
  display: flex;
  align-items: center;
  padding: 0 12px 0 1px;
  background: ${({ $active }) => ($active ? '#5f5e61' : 'none')};
  font-weight: 500;
  color: #e6e6e6;

  span {
    flex: 1;
    margin-left: 6px;
  }
`;

const Thumb = styled.i`
  width: 32px;
  height: 25px;
  margin: 0 2px;
  border: 1px solid #2f2f2f;
  background: #12585e;
`;

const PanelFooter = styled.div`
  flex: none;
  height: 25px;
  display: flex;
  align-items: center;
  justify-content: flex-end;
  padding-right: 21px;
  border-top: 1px solid #3f3f3f;
  color: #98979a;
`;

const Fx = styled.em`
  font-family: 'Liberation Serif', serif;
  font-size: 14px;
`;

const StylesBody = styled.div`
  height: 213px;
  border-top: 5px solid #4a4a4a;
  background: #464648;
`;

const StylesGrid = styled.div`
  width: 192px;
  display: grid;
  grid-template-columns: repeat(6, 32px);
  grid-auto-rows: 32px;
`;

const StyleCell = styled.button`
  display: flex;
  align-items: center;
  justify-content: center;
  border: solid #3c3c3c;
  border-width: 0 1px 1px 0;
  background: ${({ $first }) => ($first ? '#3c3b3c' : '#4a4a4a')};
`;

const Swatch = styled.i`
  width: 15px;
  height: 15px;

  ${({ $kind }) =>
    $kind === 0 &&
    css`
      width: 17px;
      height: 17px;
      border: 1px solid #000;
    `}

  ${({ $kind }) =>
    $kind === 1 &&
    css`
      box-shadow: 0 3px 4px #333;
    `}

  ${({ $kind }) =>
    ($kind === 10 || $kind === 11) &&
    css`
      width: 17px;
      height: 17px;
      border: 1px solid #353535;
    `}

  ${({ $kind }) =>
    $kind === 13 &&
    css`
      width: 21px;
      height: 21px;
      border: 2px solid #c5c8ac;
      border-radius: 3px;
      box-shadow: inset 0 0 0 1px #333;
    `}
`;

const PathsBody = styled.div`
  flex: 1;
  border-top: 5px solid #4a4a4a;
  box-shadow: inset -16px 0 #444;
  background: #464648;
`;

export default App;
